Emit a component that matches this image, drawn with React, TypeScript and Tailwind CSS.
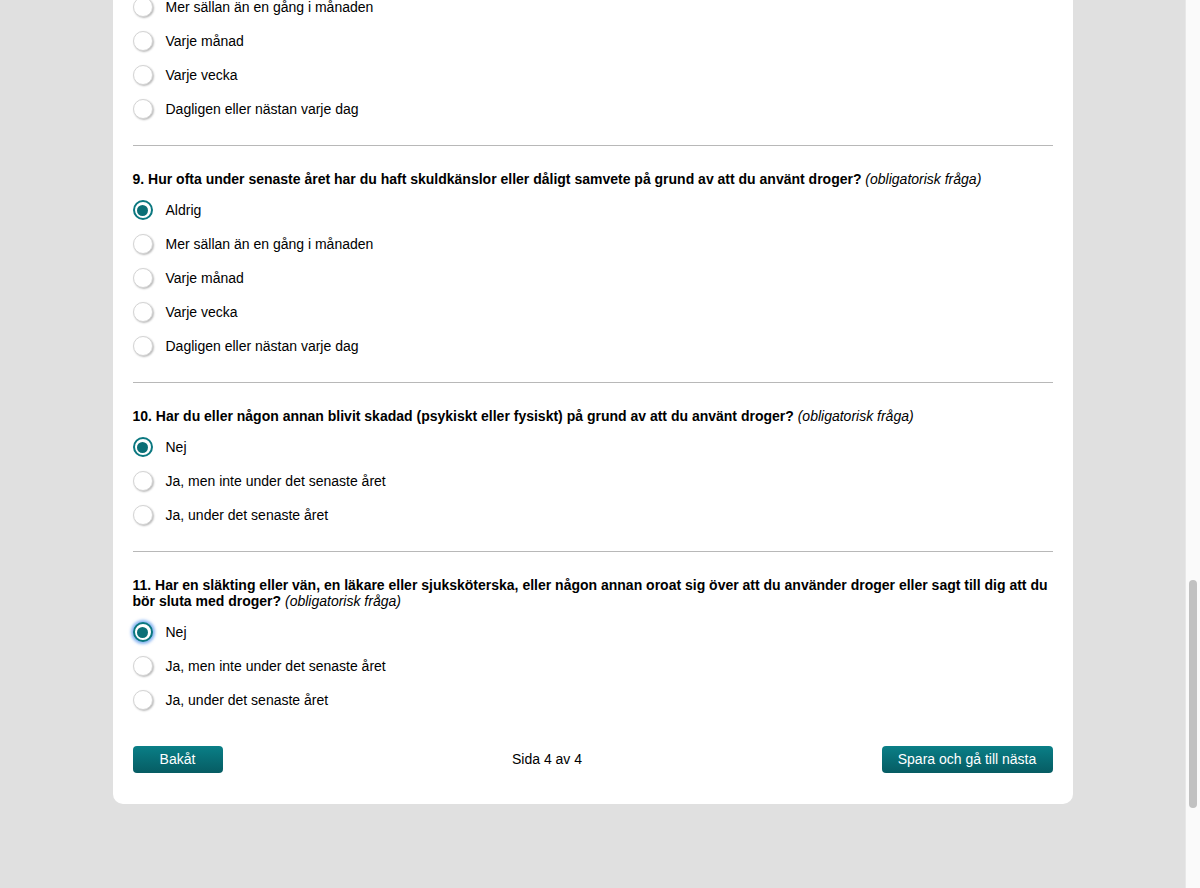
import React, { useState } from 'react';

interface Question {
  id: number;
  title: string;
  options: string[];
}

const FREQ = [
  'Aldrig',
  'Mer sällan än en gång i månaden',
  'Varje månad',
  'Varje vecka',
  'Dagligen eller nästan varje dag',
];

const HARM = ['Nej', 'Ja, men inte under det senaste året', 'Ja, under det senaste året'];

const QUESTIONS: Question[] = [
  {
    id: 8,
    title: 'Hur ofta under senaste året har du inte kunnat minnas vad som hände på grund av att du använt droger?',
    options: FREQ,
  },
  {
    id: 9,
    title: 'Hur ofta under senaste året har du haft skuldkänslor eller dåligt samvete på grund av att du använt droger?',
    options: FREQ,
  },
  {
    id: 10,
    title: 'Har du eller någon annan blivit skadad (psykiskt eller fysiskt) på grund av att du använt droger?',
    options: HARM,
  },
  {
    id: 11,
    title:
      'Har en släkting eller vän, en läkare eller sjuksköterska, eller någon annan oroat sig över att du använder droger eller sagt till dig att du bör sluta med droger?',
    options: HARM,
  },
];

function Radio({ checked, focused }: { checked: boolean; focused?: boolean }) {
  if (checked) {
    return (
      <span
        className={`flex h-[20px] w-[20px] shrink-0 items-center justify-center rounded-full border-2 border-[#0b7880] bg-white ${
          focused ? 'shadow-[0_0_3px_2px_rgba(40,120,230,0.55)]' : ''
        }`}
      >
        <span className="h-[11px] w-[11px] rounded-full bg-[#0b6f76]" />
      </span>
    );
  }
  return (
    <span className="h-[20px] w-[20px] shrink-0 rounded-full border border-[#d4d4d4] bg-white shadow-[1px_1px_2px_rgba(0,0,0,0.28)]" />
  );
}

export default function App() {
  const [answers, setAnswers] = useState<Record<number, number>>({ 8: 0, 9: 0, 10: 0, 11: 0 });

  return (
    <div
      className="flex h-screen w-full overflow-hidden bg-[#e0e0e0] text-[14px] text-black"
      style={{ fontFamily: '"Liberation Sans", Arial, sans-serif' }}
    >
      <main className="flex flex-1 flex-col justify-end overflow-hidden pb-[84px]">
        <div className="mx-auto w-[960px] shrink-0 rounded-[10px] bg-white px-5 pb-[31px]">
          {QUESTIONS.map((q, qi) => (
            <section
              key={q.id}
              className={`pt-[25px] pb-[19px] ${qi > 0 ? 'border-t border-[#b8b8b8]' : ''}`}
            >
              <p className="leading-[16px]">
                <span className="font-bold">
                  {q.id}. {q.title}
                </span>{' '}
                <span className="italic">(obligatorisk fråga)</span>
              </p>
              <div className="mt-[6px]">
                {q.options.map((opt, oi) => (
                  <label
                    key={opt}
                    className="flex h-[34px] cursor-pointer items-center gap-[13px]"
                    onClick={() => setAnswers({ ...answers, [q.id]: oi })}
                  >
                    <Radio checked={answers[q.id] === oi} focused={q.id === 11} />
                    <span>{opt}</span>
                  </label>
                ))}
              </div>
            </section>
          ))}

          <div className="mt-[10px] flex items-center justify-between">
            <button className="h-[27px] w-[90px] rounded-[4px] bg-gradient-to-b from-[#0a7f87] to-[#065c63] text-white">
              Bakåt
            </button>
            <span className="mr-[10px]">Sida 4 av 4</span>
            <button className="h-[27px] w-[171px] rounded-[4px] bg-gradient-to-b from-[#0a7f87] to-[#065c63] text-white">
              Spara och gå till nästa
            </button>
          </div>
        </div>
      </main>

      <div className="flex w-[15px] shrink-0 flex-col border-l border-[#e8e8e8] bg-[#fafafa] px-[3px] pt-[580px] pb-[80px]">
        <div className="flex-1 rounded-full bg-[#c1c1c1]" />
      </div>
    </div>
  );
}
